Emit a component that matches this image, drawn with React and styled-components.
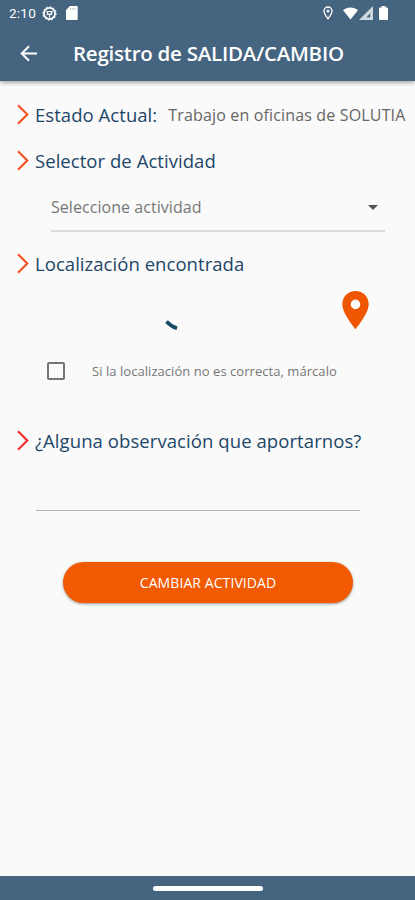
import React, { useState } from 'react';
import styled, { createGlobalStyle } from 'styled-components';

const GlobalStyle = createGlobalStyle`
  * {
    box-sizing: border-box;
  }

  body {
    margin: 0;
    background: #fafafa;
    font-family: 'Open Sans', 'Noto Sans', sans-serif;
  }
`;

const Screen = styled.div`
  display: flex;
  flex-direction: column;
  width: 415px;
  height: 900px;
  overflow: hidden;
  background: #fafafa;
`;

const Header = styled.header`
  height: 81px;
  background: #44647f;
  color: #fff;
  box-shadow: 0 1px 5px rgba(0, 0, 0, 0.45);
`;

const StatusBar = styled.div`
  display: flex;
  align-items: center;
  height: 26px;
  padding: 0 27px 0 9px;
`;

const Clock = styled.span`
  width: 33px;
  font-family: Roboto, sans-serif;
  font-size: 13.5px;
  letter-spacing: 0.25px;
`;

const StatusIcon = styled.svg`
  flex: none;
  display: block;
  margin-left: ${(props) => props.$gap || 0}px;
`;

const Spacer = styled.div`
  flex: 1;
`;

const AppBar = styled.div`
  display: flex;
  align-items: center;
  height: 55px;
  padding-left: 20px;
`;

const BackButton = styled.button`
  display: flex;
  width: 53px;
  padding: 0;
  border: 0;
  background: none;
  color: inherit;
`;

const Title = styled.h1`
  margin: 0;
  padding-bottom: 2px;
  font-size: 20.5px;
  font-weight: 600;
  letter-spacing: -0.24px;
  white-space: nowrap;
`;

const Content = styled.main`
  flex: 1;
  padding-top: 11px;
`;

const SectionRow = styled.div`
  display: flex;
  align-items: center;
  height: 46px;
  margin-top: ${(props) => props.$top || 0}px;
  padding-left: 17px;
`;

const SectionTitle = styled.h2`
  margin: 0 0 0 6px;
  padding-bottom: 2px;
  color: #1d4668;
  font-size: 18.5px;
  font-weight: 500;
  letter-spacing: ${(props) => props.$spacing || 0.05}px;
  white-space: nowrap;
`;

const CurrentState = styled.span`
  margin-left: 11px;
  color: #666;
  font-size: 16px;
  letter-spacing: 0.16px;
  white-space: nowrap;
`;

const Select = styled.div`
  display: flex;
  align-items: center;
  justify-content: space-between;
  width: 334px;
  height: 48px;
  margin-left: 51px;
  padding-right: 7px;
  border-bottom: 2px solid #dcdcdc;
  color: #777;
  font-size: 16px;
  letter-spacing: 0.05px;
`;

const Location = styled.div`
  display: flex;
  justify-content: space-between;
  height: 61px;
  padding: 4px 46px 0 165px;
`;

const Spinner = styled.svg`
  display: block;
  margin-top: 28px;
`;

const CheckRow = styled.label`
  display: flex;
  align-items: center;
  height: 46px;
  padding-left: 47px;
  color: #777;
  font-size: 13px;
  letter-spacing: 0.05px;
  white-space: nowrap;
`;

const Checkbox = styled.input`
  appearance: none;
  width: 18px;
  height: 18px;
  margin: 0 27px 0 0;
  border: 2px solid #757575;
  border-radius: 2px;
  background: ${(props) => (props.checked ? '#f25a00' : 'transparent')};
`;

const Observation = styled.input`
  display: block;
  width: 324px;
  height: 47px;
  margin-left: 36px;
  border: 0;
  border-bottom: 1px solid #b5b5b5;
  outline: 0;
  background: transparent;
  font: inherit;
`;

const SubmitButton = styled.button`
  display: block;
  width: 290px;
  height: 41px;
  margin: 51px 0 0 63px;
  padding: 0;
  border: 0;
  border-radius: 21px;
  background: #f25a00;
  box-shadow: 0 1px 3px rgba(0, 0, 0, 0.4);
  color: #fff;
  font-family: inherit;
  font-size: 14px;
  letter-spacing: 0.08px;
`;

const NavBar = styled.footer`
  display: flex;
  justify-content: center;
  height: 24px;
  padding-top: 10px;
  background: #44647f;
`;

const HomeHandle = styled.div`
  width: 110px;
  height: 5px;
  border-radius: 3px;
  background: #fff;
`;

const Chevron = ({ color = '#f4511e' }) => (
  <svg width="12" height="22" viewBox="0 0 12 22" fill="none">
    <path d="M1 1.2L10.3 10.5L1 19.8" stroke={color} strokeWidth="2.1" />
  </svg>
);

const Section = ({ title, spacing, top, color, children }) => (
  <SectionRow $top={top}>
    <Chevron color={color} />
    <SectionTitle $spacing={spacing}>{title}</SectionTitle>
    {children}
  </SectionRow>
);

const StatusIcons = () => (
  <>
    <StatusIcon width="15" height="15" viewBox="0 0 15 15" fill="none" stroke="#fff">
      <circle cx="7.5" cy="7.5" r="5.6" strokeWidth="1.8" />
      <circle cx="7.5" cy="7.5" r="6.7" strokeWidth="1" strokeDasharray="1.6 1.9" />
      <path d="M4.3 5.5H10.7M4.5 8H10.5M7.5 8V11.5M5 5.5L6.2 9M10 5.5L8.8 9" strokeWidth="1.2" />
    </StatusIcon>
    <StatusIcon $gap={9} width="12" height="14" viewBox="0 0 12 14">
      <path d="M4 0H10.5Q11.7 0 11.7 1.2V12.8Q11.7 14 10.5 14H1.2Q0 14 0 12.8V4Z" fill="#fff" />
      <path d="M4.8 2V4M6.9 2V4M9 2V4" stroke="#a9b8c5" strokeWidth="0.9" />
    </StatusIcon>
    <Spacer />
    <StatusIcon width="10" height="14" viewBox="0 0 10 14" fill="none" stroke="#fff">
      <path d="M5 12.8C2.6 9.8 1 7.2 1 5.1A4 4.1 0 0 1 9 5.1C9 7.2 7.4 9.8 5 12.8Z" strokeWidth="1.3" />
      <circle cx="5" cy="5.1" r="1.2" fill="#fff" strokeWidth="0.6" />
    </StatusIcon>
    <StatusIcon $gap={10} width="15" height="13" viewBox="0 0 16 13" preserveAspectRatio="none">
      <path d="M0 3.2C4.6-.5 11.4-.5 16 3.2L8 12.5Z" fill="#fff" />
    </StatusIcon>
    <StatusIcon $gap={1} width="14" height="14" viewBox="0 0 14 14">
      <path d="M0 14L14 0V14Z" fill="#fff" fillOpacity="0.75" />
      <path d="M7.5 11.5L11.2 7V11.5Z" fill="#44647f" />
    </StatusIcon>
    <StatusIcon $gap={6} width="9" height="14" viewBox="0 0 9 14">
      <path d="M2.5 0H6.5V1.5H8Q9 1.5 9 2.5V13Q9 14 8 14H1Q0 14 0 13V2.5Q0 1.5 1 1.5H2.5Z" fill="#fff" />
    </StatusIcon>
  </>
);

const App = () => {
  const [wrongLocation, setWrongLocation] = useState(false);
  const [observation, setObservation] = useState('');

  return (
    <>
      <GlobalStyle />
      <Screen>
        <Header>
          <StatusBar>
            <Clock>2:10</Clock>
            <StatusIcons />
          </StatusBar>
          <AppBar>
            <BackButton aria-label="Volver">
              <svg width="18" height="18" viewBox="0 0 18 18" fill="none" stroke="#fff" strokeWidth="2">
                <path d="M17 8.5H2.5M9 1.2L1.7 8.5L9 15.8" />
              </svg>
            </BackButton>
            <Title>Registro de SALIDA/CAMBIO</Title>
          </AppBar>
        </Header>

        <Content>
          <Section title="Estado Actual:">
            <CurrentState>Trabajo en oficinas de SOLUTIA</CurrentState>
          </Section>

          <Section title="Selector de Actividad" />
          <Select>
            Seleccione actividad
            <svg width="10" height="5" viewBox="0 0 10 5">
              <path d="M0 0H10L5 5Z" fill="#555" />
            </svg>
          </Select>

          <Section title="Localización encontrada" top={9} />
          <Location>
            <Spinner width="14" height="14" viewBox="0 0 14 14" fill="none">
              <path d="M1.5 2.5Q6 7.5 12 9.3" stroke="#1b4a67" strokeWidth="3.6" />
            </Spinner>
            <svg width="27" height="38" viewBox="0 0 27 38">
              <path
                d="M13.5 0C6 0 .3 5.9.3 13.2C.3 22.9 13.5 38 13.5 38S26.7 22.9 26.7 13.2C26.7 5.9 21 0 13.5 0ZM13.5 18.2A4.8 4.8 0 1 1 13.5 8.6A4.8 4.8 0 0 1 13.5 18.2Z"
                fill="#ee5700"
              />
            </svg>
          </Location>
          <CheckRow>
            <Checkbox
              type="checkbox"
              checked={wrongLocation}
              onChange={(e) => setWrongLocation(e.target.checked)}
            />
            Si la localización no es correcta, márcalo
          </CheckRow>

          <Section
            title="¿Alguna observación que aportarnos?"
            spacing={0.08}
            top={24}
            color="#f02d2d"
          />
          <Observation value={observation} onChange={(e) => setObservation(e.target.value)} />

          <SubmitButton>CAMBIAR ACTIVIDAD</SubmitButton>
        </Content>

        <NavBar>
          <HomeHandle />
        </NavBar>
      </Screen>
    </>
  );
};

export default App;
